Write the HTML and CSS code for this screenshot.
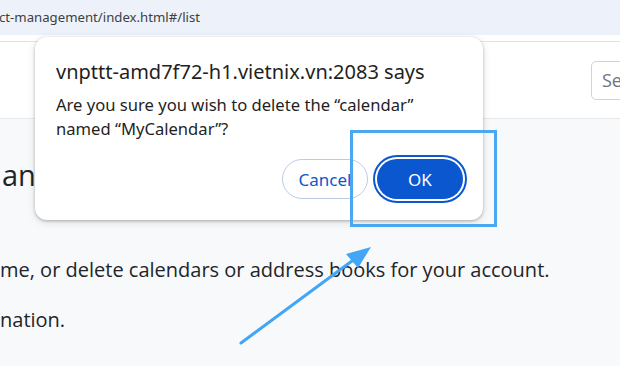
FILE: index.html
```html
<!DOCTYPE html>
<html>
<head>
<meta charset="utf-8">
<link rel="stylesheet" href="styles.css">
</head>
<body>
<div class="urlbar"><span class="url">ct-management/index.html#/list</span></div>
<div class="gap"></div>
<header class="header">
  <input class="search" type="text" placeholder="Search">
</header>
<main class="main">
  <h1 class="title">anage Calendars</h1>
  <p class="lead">me, or delete calendars or address books for your account.</p>
  <p class="lead">nation.</p>
</main>

<div class="dialog">
  <div class="dlg-title">vnpttt-amd7f72-h1.vietnix.vn:2083 says</div>
  <div class="dlg-msg">Are you sure you wish to delete the “calendar” named “MyCalendar”?</div>
  <div class="dlg-actions">
    <button class="btn btn-cancel">Cancel</button>
    <button class="btn btn-ok">OK</button>
  </div>
</div>

<div class="highlight"></div>
<svg class="arrow" width="620" height="366" viewBox="0 0 620 366">
  <line x1="241" y1="343" x2="356" y2="258" stroke="#42a5f5" stroke-width="3" stroke-linecap="round"/>
  <polygon points="371,247 346,254 358,268" fill="#42a5f5"/>
</svg>
</body>
</html>
```

FILE: styles.css
```css
html, body {
  margin: 0;
  padding: 0;
}
body {
  width: 620px;
  height: 366px;
  overflow: hidden;
  background: #f8f9fa;
  font-family: "Open Sans", "Noto Sans", sans-serif;
  color: #212529;
  position: relative;
}
.urlbar {
  height: 35px;
  background: #edf2fa;
  display: flex;
  align-items: flex-start;
  overflow: hidden;
}
.url {
  font-family: "Noto Sans", sans-serif;
  font-size: 13.2px;
  color: #3c4043;
  line-height: 20px;
  margin-top: 7px;
  margin-left: -1px;
  white-space: nowrap;
}
.gap {
  height: 6px;
  background: #ffffff;
  border-bottom: 1px solid #e3e3e3;
}
.header {
  height: 76px;
  background: #ffffff;
  border-bottom: 1px solid #e6e8ea;
  display: flex;
  align-items: center;
  justify-content: flex-end;
  overflow: hidden;
}
.search {
  box-sizing: border-box;
  width: 200px;
  height: 39px;
  margin-right: -171px;
  border: 1px solid #ced4da;
  border-radius: 5px;
  padding: 0 10px;
  font-family: "Open Sans", sans-serif;
  font-size: 18px;
  color: #6c757d;
  background: #fff;
  outline: none;
}
.search::placeholder {
  color: #6c757d;
}
.main {
  padding: 0 0 0 2px;
}
.title {
  margin: 36px 0 0 0;
  font-size: 29px;
  font-weight: 400;
  line-height: 40px;
  white-space: nowrap;
}
.lead {
  margin: 0 0 0 -2px;
  font-size: 20px;
  line-height: 26px;
  white-space: nowrap;
}
.title + .lead {
  margin-top: 62px;
}
.lead + .lead {
  margin-top: 24px;
}
.dialog {
  position: absolute;
  left: 35px;
  top: 37px;
  width: 448px;
  height: 183px;
  box-sizing: border-box;
  background: #fff;
  border-radius: 12px;
  box-shadow: 0 1px 3px rgba(0,0,0,0.25), 0 2px 8px rgba(0,0,0,0.12);
  padding: 22px 20px 21px 21px;
  display: flex;
  flex-direction: column;
  font-family: "Noto Sans", sans-serif;
  color: #1f1f1f;
}
.dlg-title {
  font-size: 20px;
  line-height: 26px;
  white-space: nowrap;
}
.dlg-msg {
  margin-top: 8px;
  font-size: 16.6px;
  line-height: 24px;
  width: 400px;
}
.dlg-actions {
  margin-top: auto;
  display: flex;
  justify-content: flex-end;
  gap: 9px;
}
.btn {
  box-sizing: border-box;
  height: 40px;
  width: 86px;
  border-radius: 20px;
  font-family: "Noto Sans", sans-serif;
  font-size: 17px;
  padding: 0;
}
.btn-cancel {
  background: #fff;
  border: 1px solid #bccbe4;
  color: #0b57d0;
}
.btn-ok {
  background: #0b57d0;
  border: none;
  color: #fff;
  box-shadow: 0 0 0 2px #fff, 0 0 0 4px #0b57d0;
}
.highlight {
  position: absolute;
  left: 350px;
  top: 130px;
  width: 141px;
  height: 91px;
  border: 3px solid #4aa8f0;
}
.arrow {
  position: absolute;
  left: 0;
  top: 0;
}
```
